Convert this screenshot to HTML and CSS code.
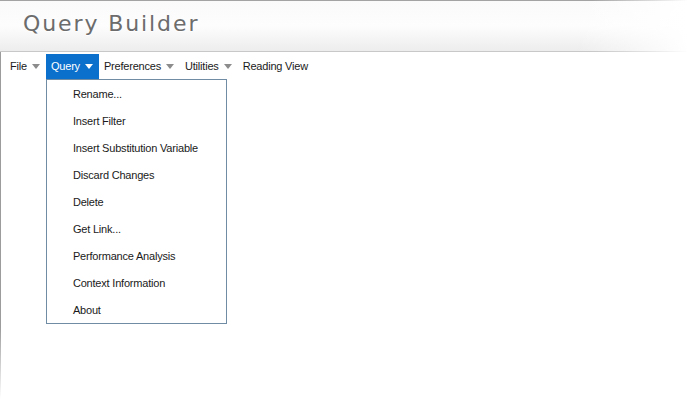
FILE: index.html
```html
<!DOCTYPE html>
<html lang="en">
<head>
  <meta charset="utf-8" />
  <title>Query Builder</title>
  <link rel="stylesheet" href="styles.css">
</head>
<body>
  <div id="window">
    <header>
      <h1>Query Builder</h1>
    </header>
    <nav id="menubar">
      <div class="menu">File<span class="arrow"></span></div>
      <div class="menu open">Query<span class="arrow"></span>
        <ul class="dropdown">
          <li>Rename...</li>
          <li>Insert Filter</li>
          <li>Insert Substitution Variable</li>
          <li>Discard Changes</li>
          <li>Delete</li>
          <li>Get Link...</li>
          <li>Performance Analysis</li>
          <li>Context Information</li>
          <li>About</li>
        </ul>
      </div>
      <div class="menu">Preferences<span class="arrow"></span></div>
      <div class="menu">Utilities<span class="arrow"></span></div>
      <div class="menu">Reading View</div>
    </nav>
  </div>
</body>
</html>
```

FILE: styles.css
```css
html, body { margin: 0; padding: 0; background: #fff; font-family: "Liberation Sans", Arial, sans-serif; font-size: 11px; letter-spacing: -0.2px; color: #1a1a1a; }
#window {
  height: 399px;
  box-sizing: border-box;
  background:
    linear-gradient(to bottom, #9c9c9c 82%, #fff) left top / 1px 100% no-repeat;
}
header {
  height: 52px;
  box-sizing: border-box;
  padding: 10px 0 0 23px;
  background:
    linear-gradient(to right, #a3a3a3 86%, rgba(163,163,163,0)) left top / 100% 1px no-repeat,
    linear-gradient(to right, #c8c8c8 86%, rgba(200,200,200,0)) left bottom / 100% 1px no-repeat,
    linear-gradient(to right, rgba(255,255,255,0) 84%, #fff) ,
    linear-gradient(to bottom, #fafafa 0%, #fdfdfd 50%, #ececec 100%);
}
h1 {
  margin: 0;
  font-family: "DejaVu Sans", sans-serif;
  font-weight: normal;
  font-size: 22px;
  line-height: 28px;
  letter-spacing: 1.9px;
  color: #6c6c6c;
  text-shadow: 0 1px 0 #fff;
}
#menubar { display: flex; height: 25px; margin-top: 2px; padding-left: 5px; }
.menu { position: relative; display: flex; align-items: center; padding: 0 6px 0 5px; line-height: 25px; white-space: nowrap; }
.arrow {
  display: inline-block;
  width: 0; height: 0;
  margin-left: 5px;
  border-left: 4px solid transparent;
  border-right: 4px solid transparent;
  border-top: 5px solid #8c8c8c;
}
.menu.open { background: #0b6fcc; color: #fff; }
.menu.open .arrow { border-top-color: #fff; }
.dropdown {
  position: absolute;
  left: 0; top: 25px;
  width: 179px;
  margin: 0; padding: 0;
  list-style: none;
  background: #fff;
  border: 1px solid #6f8ca4;
  color: #1a1a1a;
}
.dropdown li { height: 27px; line-height: 28px; padding-left: 26px; }
```
